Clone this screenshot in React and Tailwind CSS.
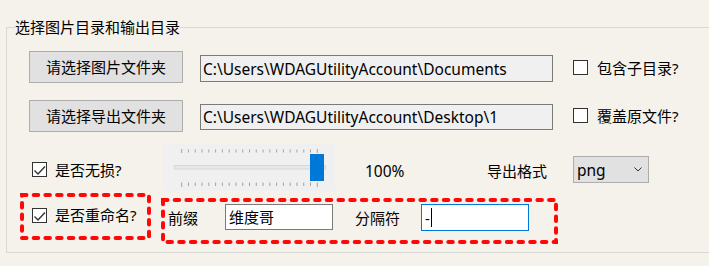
import React from "react";

const FONT = "font-[family-name:'Noto_Sans','Noto_Sans_CJK_SC',sans-serif]";

function Check({ checked }) {
  return (
    <div className="w-[15px] h-[15px] border border-[#333333] bg-white shrink-0">
      {checked && (
        <svg width="13" height="13" viewBox="0 0 13 13" className="block">
          <polyline points="1.5,7.5 5,11 12,3.5" fill="none" stroke="#333333" strokeWidth="1.4" />
        </svg>
      )}
    </div>
  );
}

function RedBox({ w, h, children, className }) {
  return (
    <div className={`relative shrink-0 ${className}`} style={{ width: w, height: h }}>
      <svg width={w} height={h} className="absolute inset-0 pointer-events-none">
        <rect x="2" y="2" width={w - 4} height={h - 4} fill="none" stroke="#ff0808" strokeWidth="4" strokeDasharray="4.5 7.2" strokeLinecap="round" />
      </svg>
      <div className="relative flex items-start">{children}</div>
    </div>
  );
}

function Slider() {
  const ticks = [];
  for (let i = 0; i <= 20; i++) {
    const x = 18.7 + i * 6.78;
    const long = i === 0 || i === 20;
    ticks.push(<line key={"t" + i} x1={x} x2={x} y1={long ? 5 : 5.5} y2={long ? 9 : 8.5} stroke="#a3a3a3" strokeWidth="1" />);
    ticks.push(<line key={"b" + i} x1={x} x2={x} y1={38.5} y2={long ? 43 : 42} stroke="#a3a3a3" strokeWidth="1" />);
  }
  return (
    <div className="w-[172px] h-[47px] bg-[#f0f0f0] shrink-0">
      <svg width="172" height="47" className="block">
        {ticks}
        <rect x="11.5" y="21.5" width="151" height="3.5" fill="#e7e7e7" stroke="#d6d6d6" strokeWidth="1" />
        <rect x="147" y="10" width="14" height="27" fill="#0078d7" />
      </svg>
    </div>
  );
}

export default function App() {
  return (
    <div className={`w-[709px] h-[266px] overflow-hidden bg-[#f4f2eb] pt-[17px] pl-[6px] text-black text-[15px] leading-[20px] ${FONT}`}>
      <fieldset className="w-[720px] h-[236px] border border-[#d9d9d6] pl-[8px]">
        <legend className="leading-[20px] p-0">选择图片目录和输出目录</legend>

        {/* row 1 */}
        <div className="mt-[14px] flex items-start">
          <button className="ml-[14px] w-[154px] h-[32px] bg-[#e1e1e1] border border-[#adadad] flex items-center justify-center">请选择图片文件夹</button>
          <div className="ml-[17px] mt-[4px] w-[353px] h-[27px] bg-[#f0f0f0] border border-[#7a7a7a] pl-[2px] flex items-center text-[15.5px] whitespace-nowrap">C:\Users\WDAGUtilityAccount\Documents</div>
          <div className="ml-[20px] mt-[9px]"><Check /></div>
          <span className="ml-[9px] mt-[7px]">包含子目录?</span>
        </div>

        {/* row 2 */}
        <div className="mt-[17px] flex items-start">
          <button className="ml-[14px] w-[154px] h-[32px] bg-[#e1e1e1] border border-[#adadad] flex items-center justify-center">请选择导出文件夹</button>
          <div className="ml-[17px] mt-[4px] w-[353px] h-[26px] bg-[#f0f0f0] border border-[#7a7a7a] pl-[2px] flex items-center text-[15.5px] whitespace-nowrap">C:\Users\WDAGUtilityAccount\Desktop\1</div>
          <div className="ml-[20px] mt-[8px]"><Check /></div>
          <span className="ml-[9px] mt-[6px]">覆盖原文件?</span>
        </div>

        {/* row 3 */}
        <div className="mt-[12px] flex items-start h-[47px]">
          <div className="ml-[17px] w-[131px] flex items-start shrink-0">
            <div className="mt-[18px]"><Check checked /></div>
            <span className="ml-[8px] mt-[16px]">是否无损?</span>
          </div>
          <Slider />
          <span className="ml-[30px] w-[122px] mt-[17px] shrink-0 text-[15.5px]">100%</span>
          <span className="w-[86px] mt-[17px] shrink-0">导出格式</span>
          <div className="mt-[12px] w-[76px] h-[27px] bg-[#e1e1e1] border border-[#adadad] flex items-center pl-[3px] pr-[6px] justify-between shrink-0">
            <span className="text-[15.5px]">png</span>
            <svg width="8" height="5" viewBox="0 0 8 5" className="block">
              <polyline points="0.5,0.5 4,4 7.5,0.5" fill="none" stroke="#333" strokeWidth="1" />
            </svg>
          </div>
        </div>

        {/* row 4 */}
        <div className="mt-[2px] flex items-start">
          <RedBox w={131} h={47} className="ml-[5px]">
            <div className="ml-[12px] mt-[15px]"><Check checked /></div>
            <span className="ml-[8px] mt-[12px]">是否重命名?</span>
          </RedBox>
          <RedBox w={397} h={46} className="ml-[10px] mt-[5px]">
            <span className="ml-[7px] mt-[10px] w-[57px] shrink-0">前缀</span>
            <div className="mt-[6px] w-[108px] h-[26px] bg-white border border-[#7a7a7a] pl-[3px] flex items-center shrink-0">维度哥</div>
            <span className="ml-[22px] mt-[10px] w-[66px] shrink-0">分隔符</span>
            <div className="mt-[6px] w-[108px] h-[27px] bg-white border border-[#0078d7] pl-[3px] flex items-center shrink-0">
              <span>-</span>
              <span className="ml-[1px] w-[1px] h-[19px] bg-black"></span>
            </div>
          </RedBox>
        </div>
      </fieldset>
    </div>
  );
}
